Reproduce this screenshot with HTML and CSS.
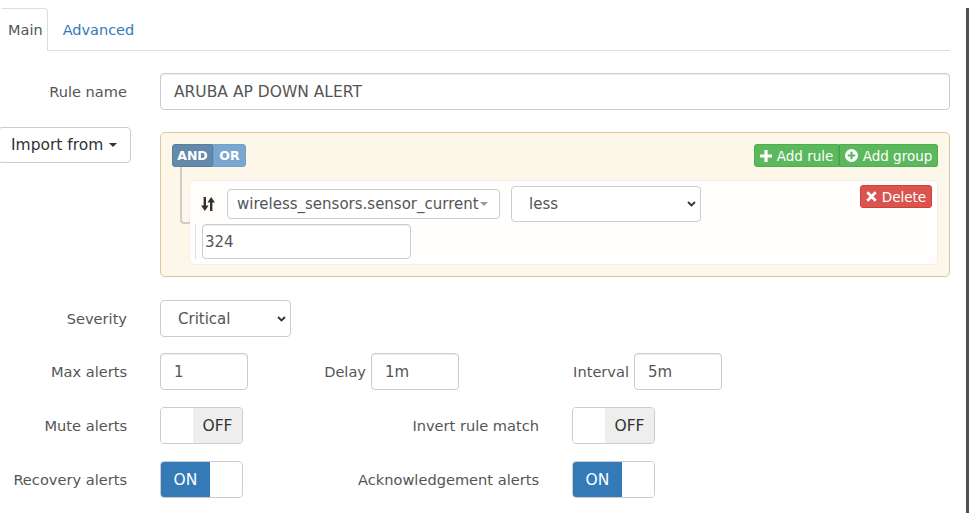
FILE: index.html
```html
<!DOCTYPE html>
<html>
  <head>
    <meta charset="utf-8" />
    <title>Alert rule</title>
    <link rel="stylesheet" href="styles.css">
  </head>
  <body>
    <div class="window">
      <ul class="tabs">
        <li class="tab active">Main</li>
        <li class="tab"><a href="#">Advanced</a></li>
      </ul>

      <form class="form">
        <!-- Rule name -->
        <div class="row">
          <label class="row-label">Rule name</label>
          <input class="input input-wide" value="ARUBA AP DOWN ALERT" />
        </div>

        <!-- Query builder -->
        <div class="row row-builder">
          <div class="row-label import-cell">
            <button type="button" class="btn import-btn">Import from <span class="caret"></span></button>
          </div>
          <div class="builder">
            <div class="group-header">
              <div class="btn-group">
                <button type="button" class="btn-xs cond cond-and">AND</button>
                <button type="button" class="btn-xs cond cond-or">OR</button>
              </div>
              <div class="btn-group">
                <button type="button" class="btn-xs success add-rule">
                  <svg width="12" height="12" viewBox="0 0 12 12"><path d="M4.4 0h3.2v4.4H12v3.2H7.6V12H4.4V7.6H0V4.4h4.4z" fill="#fff"/></svg>
                  Add rule
                </button>
                <button type="button" class="btn-xs success add-group">
                  <svg width="13" height="13" viewBox="0 0 13 13"><circle cx="6.5" cy="6.5" r="6.5" fill="#fff"/><path d="M5.4 2.8h2.2v2.6h2.6v2.2H7.6v2.6H5.4V7.6H2.8V5.4h2.6z" fill="#5cb85c"/></svg>
                  Add group
                </button>
              </div>
            </div>

            <div class="rules-list">
              <div class="rule">
                <div class="rule-main">
                  <span class="drag-handle">
                    <svg width="14" height="16" viewBox="0 0 14 16">
                      <rect x="2.6" y="1" width="2.4" height="9" fill="#333"/>
                      <polygon points="0,9.5 7.6,9.5 3.8,15" fill="#333"/>
                      <rect x="9" y="6" width="2.4" height="9" fill="#333"/>
                      <polygon points="6.4,6.5 14,6.5 10.2,1" fill="#333"/>
                    </svg>
                  </span>
                  <div class="picker">wireless_sensors.sensor_current <span class="caret caret-light"></span></div>
                  <div class="select select-op">
                    less
                    <svg width="9" height="6" viewBox="0 0 9 6"><polyline points="1,1 4.5,4.5 8,1" fill="none" stroke="#333" stroke-width="1.8"/></svg>
                  </div>
                  <button type="button" class="btn-xs danger delete-btn">
                    <svg width="11" height="11" viewBox="0 0 11 11"><path d="M1.3 1.3l8.4 8.4M9.7 1.3l-8.4 8.4" stroke="#fff" stroke-width="2.8"/></svg>
                    Delete
                  </button>
                </div>
                <div class="rule-value">
                  <input class="input value-input" value="324" />
                </div>
              </div>
            </div>
          </div>
        </div>

        <!-- Severity -->
        <div class="row row-severity">
          <label class="row-label">Severity</label>
          <div class="select select-severity">
            Critical
            <svg width="9" height="6" viewBox="0 0 9 6"><polyline points="1,1 4.5,4.5 8,1" fill="none" stroke="#333" stroke-width="1.8"/></svg>
          </div>
        </div>

        <!-- Counts -->
        <div class="row">
          <label class="row-label">Max alerts</label>
          <div class="count-grid">
            <input class="input input-small" value="1" />
            <label class="inline-label">Delay</label>
            <input class="input input-small" value="1m" />
            <label class="inline-label">Interval</label>
            <input class="input input-small" value="5m" />
          </div>
        </div>

        <!-- Switches -->
        <div class="row">
          <label class="row-label">Mute alerts</label>
          <div class="switch-grid">
            <div class="switch switch-off"><span class="switch-handle"></span><span class="switch-text">OFF</span></div>
            <label class="switch-label">Invert rule match</label>
            <div class="switch switch-off"><span class="switch-handle"></span><span class="switch-text">OFF</span></div>
          </div>
        </div>

        <div class="row">
          <label class="row-label">Recovery alerts</label>
          <div class="switch-grid">
            <div class="switch switch-on"><span class="switch-text">ON</span><span class="switch-handle"></span></div>
            <label class="switch-label">Acknowledgement alerts</label>
            <div class="switch switch-on"><span class="switch-text">ON</span><span class="switch-handle"></span></div>
          </div>
        </div>
      </form>
    </div>
  </body>
</html>
```

FILE: styles.css
```css
body {
  margin: 0;
  padding: 0;
  overflow: hidden;
  font-family: "DejaVu Sans", Verdana, sans-serif;
  font-size: 14.6px;
  color: #555;
  background: #fff;
}

.window {
  width: 969px;
  height: 513px;
  box-sizing: border-box;
  padding-right: 16px;
  border-right: 3px solid #505050;
}

/* Tabs */
.tabs {
  display: flex;
  list-style: none;
  margin: 8px 0 0 0;
  padding: 0;
  border-bottom: 1px solid #ddd;
}

.tab {
  line-height: 20px;
  padding: 11px 4px 10px 7px;
  margin-bottom: -1px;
  border: 1px solid transparent;
  border-radius: 4px 4px 0 0;
  font-size: 14.5px;
}

.tab.active {
  border-color: #ddd;
  border-bottom-color: #fff;
  border-left-color: transparent;
  background: #fff;
  color: #555;
}

.tab + .tab {
  padding-left: 14px;
}

.tab a {
  color: #337ab7;
  text-decoration: none;
}

/* Form rows */
.form {
  padding-top: 22px;
}

.row {
  display: flex;
  align-items: center;
  margin-bottom: 17px;
}

.row-label {
  width: 127px;
  margin-right: 33px;
  text-align: right;
  flex-shrink: 0;
}

.row-builder {
  align-items: flex-start;
  margin-bottom: 23px;
}

.row-severity {
  margin-bottom: 16px;
}

.import-cell {
  width: 131px;
  margin-right: 29px;
  text-align: left;
}

/* Inputs */
.input {
  height: 37px;
  box-sizing: border-box;
  border: 1px solid #ccc;
  border-radius: 4px;
  padding: 0 13px;
  font: inherit;
  font-size: 15px;
  color: #555;
  background: #fff;
  box-shadow: inset 0 1px 1px rgba(0, 0, 0, 0.075);
  outline: none;
}

.input-wide {
  flex: 1;
  font-size: 15.5px;
}

.input-small {
  width: 88px;
}

.select {
  display: flex;
  align-items: center;
  justify-content: space-between;
  box-sizing: border-box;
  border: 1px solid #ccc;
  border-radius: 4px;
  background: #fff;
  color: #555;
  font-size: 15px;
}

.select-severity {
  width: 131px;
  height: 37px;
  padding: 0 4px 0 17px;
}

.select-op {
  width: 190px;
  height: 36px;
  padding: 0 4px 0 17px;
}

/* Buttons */
.btn {
  display: flex;
  align-items: center;
  justify-content: space-between;
  box-sizing: border-box;
  height: 36px;
  border: 1px solid #ccc;
  border-radius: 4px;
  background: #fff;
  font: inherit;
  font-size: 15.5px;
  color: #333;
  cursor: pointer;
}

.import-btn {
  width: 133px;
  margin-left: -2px;
  padding: 0 13px 0 12px;
}

.caret {
  display: inline-block;
  width: 0;
  height: 0;
  border-top: 4px solid #333;
  border-left: 4px solid transparent;
  border-right: 4px solid transparent;
}

.caret-light {
  border-top-color: #999;
}

.btn-group {
  display: flex;
}

.btn-xs {
  display: flex;
  align-items: center;
  justify-content: center;
  gap: 5px;
  height: 23px;
  box-sizing: border-box;
  padding: 0;
  border: 1px solid transparent;
  font-family: inherit;
  font-size: 13.5px;
  color: #fff;
  cursor: pointer;
}

.btn-group .btn-xs:first-child {
  border-radius: 3px 0 0 3px;
}

.btn-group .btn-xs:last-child {
  border-radius: 0 3px 3px 0;
}

.cond {
  font-size: 12.5px;
  font-weight: bold;
}

.cond-and {
  width: 41px;
  background: #6389ab;
  border-color: #5a7f9f;
}

.cond-or {
  width: 33px;
  background: #7aa7cf;
  border-color: #74a0c6;
}

.success {
  background: #5cb85c;
  border-color: #4cae4c;
}

.add-rule {
  width: 85px;
}

.add-group {
  width: 99px;
  border-left-color: #4a9f4a;
}

.danger {
  background: #d9534f;
  border-color: #d43f3a;
  border-radius: 3px;
}

/* Query builder */
.builder {
  flex: 1;
  margin-top: 5px;
  padding: 11px;
  border: 1px solid #dcc896;
  border-radius: 5px;
  background: #fdf7e9;
}

.group-header {
  display: flex;
  justify-content: space-between;
}

.rules-list {
  margin-top: 13px;
  padding-left: 17px;
}

.rule {
  position: relative;
  padding: 5px;
  border: 1px solid #eee;
  border-radius: 5px;
  background: #fffefc;
}

/* connector from the AND/OR group to the rule */
.rule::before {
  content: "";
  position: absolute;
  left: -10px;
  top: -14px;
  width: 8px;
  height: 55px;
  border-left: 2px solid #ccc;
  border-bottom: 2px solid #ccc;
  border-radius: 0 0 0 4px;
}

.rule-main {
  display: flex;
  align-items: center;
  height: 36px;
}

.drag-handle {
  display: flex;
  margin: 0 12px 0 6px;
}

.picker {
  display: flex;
  align-items: center;
  justify-content: space-between;
  width: 273px;
  height: 30px;
  box-sizing: border-box;
  padding: 0 11px 0 9px;
  border: 1px solid #ccc;
  border-radius: 4px;
  background: #fff;
  font-size: 15px;
  color: #555;
  margin-right: 11px;
}

.delete-btn {
  width: 72px;
  margin-left: auto;
  align-self: flex-start;
  margin-top: -1px;
}

.rule-value {
  margin-top: 2px;
  padding-left: 6px;
  border-left: 1px solid #ddd;
}

.value-input {
  width: 209px;
  height: 35px;
  padding: 0 2px;
}

/* Delay / interval */
.count-grid {
  display: grid;
  grid-template-columns: 88px 123px 88px 175px 88px;
  align-items: center;
}

.inline-label {
  text-align: right;
  padding-right: 5px;
}

/* Switches */
.switch-grid {
  display: grid;
  grid-template-columns: 83px 329px 83px;
  align-items: center;
}

.switch-label {
  text-align: right;
  padding-right: 33px;
}

.switch {
  display: flex;
  height: 37px;
  box-sizing: border-box;
  border: 1px solid #ccc;
  border-radius: 4px;
  overflow: hidden;
  background: #fff;
}

.switch-handle {
  width: 32px;
  background: #fff;
}

.switch-text {
  flex: 1;
  display: flex;
  align-items: center;
  justify-content: center;
  font-size: 15.5px;
}

.switch-off .switch-text {
  background: #eee;
  color: #333;
}

.switch-on .switch-text {
  background: #337ab7;
  color: #fff;
}
```
